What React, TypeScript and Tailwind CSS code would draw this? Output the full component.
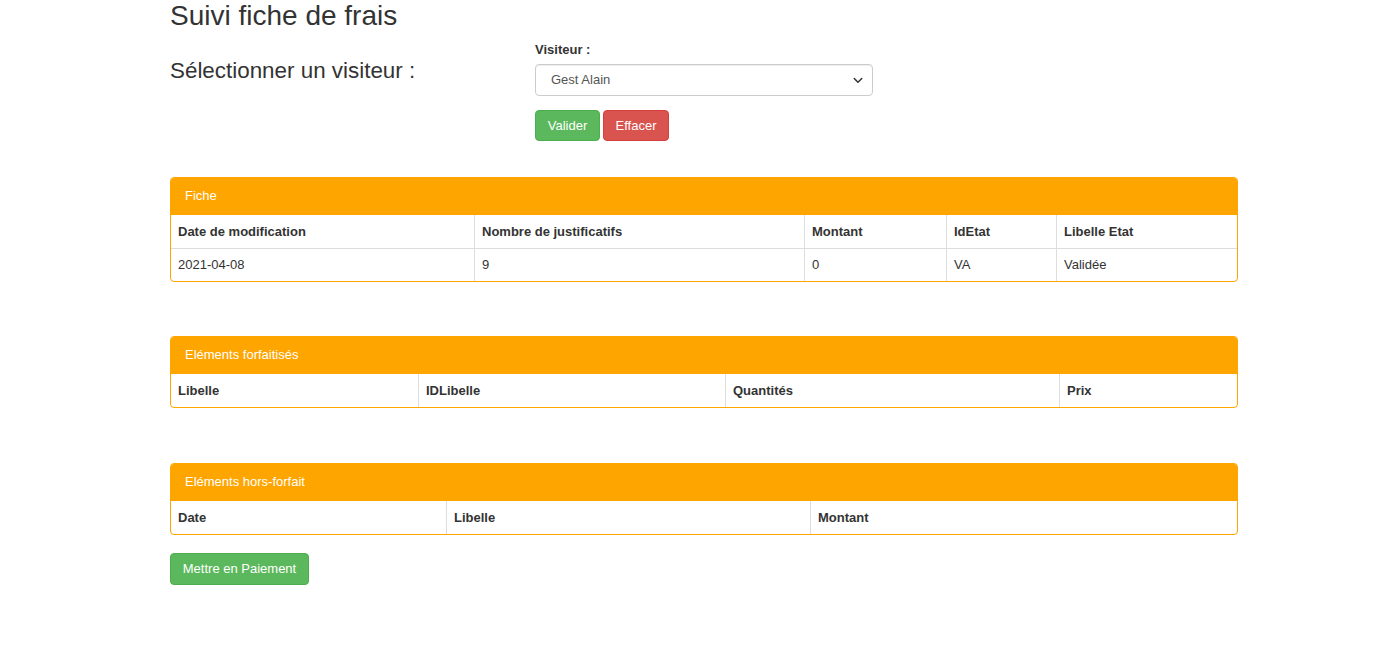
import React from "react";

type Panel = {
  title: string;
  cols: { label: string; w: string }[];
  rows: string[][];
};

const panels: Panel[] = [
  {
    title: "Fiche",
    cols: [
      { label: "Date de modification", w: "w-[303px]" },
      { label: "Nombre de justificatifs", w: "w-[330px]" },
      { label: "Montant", w: "w-[142px]" },
      { label: "IdEtat", w: "w-[110px]" },
      { label: "Libelle Etat", w: "flex-1" },
    ],
    rows: [["2021-04-08", "9", "0", "VA", "Validée"]],
  },
  {
    title: "Eléments forfaitisés",
    cols: [
      { label: "Libelle", w: "w-[247px]" },
      { label: "IDLibelle", w: "w-[307px]" },
      { label: "Quantités", w: "w-[334px]" },
      { label: "Prix", w: "flex-1" },
    ],
    rows: [],
  },
  {
    title: "Eléments hors-forfait",
    cols: [
      { label: "Date", w: "w-[275px]" },
      { label: "Libelle", w: "w-[364px]" },
      { label: "Montant", w: "flex-1" },
    ],
    rows: [],
  },
];

function PanelTable({ panel, className }: { panel: Panel; className: string }) {
  return (
    <div className={"border border-[#ffa500] rounded-[4px] overflow-hidden " + className}>
      <div className="h-[37px] bg-[#ffa500] text-white pl-[14px] pb-[2px] flex items-center text-[13px]">
        {panel.title}
      </div>
      <div className="flex h-[33px]">
        {panel.cols.map((c, i) => (
          <div
            key={c.label}
            className={
              c.w +
              " flex items-center pl-[7px] font-bold" +
              (i > 0 ? " border-l border-[#ddd]" : "")
            }
          >
            {c.label}
          </div>
        ))}
      </div>
      {panel.rows.map((r, ri) => (
        <div key={ri} className="flex h-[33px] border-t border-[#ddd]">
          {r.map((v, i) => (
            <div
              key={i}
              className={
                panel.cols[i].w +
                " flex items-center pl-[7px]" +
                (i > 0 ? " border-l border-[#ddd]" : "")
              }
            >
              {v}
            </div>
          ))}
        </div>
      ))}
    </div>
  );
}

export default function App() {
  return (
    <div
      className="min-h-[645px] bg-white text-[#333] text-[13px]"
      style={{ fontFamily: '"Liberation Sans", Arial, sans-serif' }}
    >
      <div className="ml-[170px] w-[1068px]">
        <h1 className="text-[28px] leading-[31px] pt-0 m-0">Suivi fiche de frais</h1>

        <div className="flex mt-[10px]">
          <h3 className="w-[365px] text-[22.4px] leading-[24px] mt-[18px]">
            Sélectionner un visiteur :
          </h3>
          <div>
            <div className="font-bold leading-[18px]">Visiteur :</div>
            <div className="mt-[5px] w-[338px] h-[32px] border border-[#ccc] rounded-[4px] shadow-[inset_0_1px_1px_rgba(0,0,0,0.075)] flex items-center justify-between pl-[15px] pr-[8px] text-[#555]">
              <span>Gest Alain</span>
              <svg width="12" height="12" viewBox="0 0 16 16" fill="none">
                <path
                  d="M3 6l5 5 5-5"
                  stroke="#333"
                  strokeWidth="2"
                  strokeLinecap="round"
                  strokeLinejoin="round"
                />
              </svg>
            </div>
            <div className="flex gap-[3px] mt-[14px]">
              <button className="w-[65px] h-[31px] bg-[#5cb85c] border border-[#4cae4c] rounded-[4px] text-white">
                Valider
              </button>
              <button className="w-[66px] h-[31px] bg-[#d9534f] border border-[#d43f3a] rounded-[4px] text-white">
                Effacer
              </button>
            </div>
          </div>
        </div>

        <PanelTable panel={panels[0]} className="mt-[36px]" />
        <PanelTable panel={panels[1]} className="mt-[54px]" />
        <PanelTable panel={panels[2]} className="mt-[55px]" />

        <button className="mt-[18px] w-[139px] h-[32px] bg-[#5cb85c] border border-[#4cae4c] rounded-[4px] text-white">
          Mettre en Paiement
        </button>
      </div>
    </div>
  );
}
